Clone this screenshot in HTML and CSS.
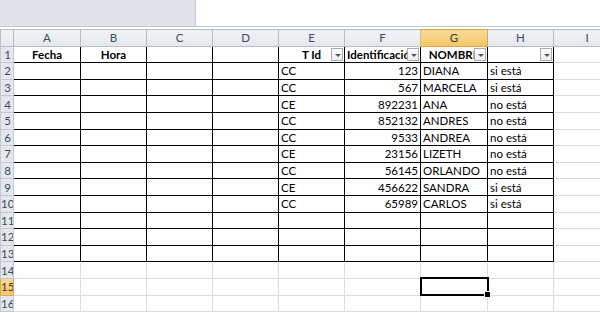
FILE: index.html
```html
<!DOCTYPE html>
<html lang="es">
<head>
    <meta charset="UTF-8">
    <title>Libro1 - Hoja1</title>
    <link rel="stylesheet" href="styles.css">
</head>
<body>
<div class="top">
    <div class="namebox"></div>
    <div class="formula"></div>
</div>
<div class="gap"></div>
<table class="sheet">
    <colgroup>
        <col class="c-rh"><col class="c-a"><col class="c-b"><col class="c-c"><col class="c-d">
        <col class="c-e"><col class="c-f"><col class="c-g"><col class="c-h"><col class="c-i">
    </colgroup>
    <tr class="colhead">
        <th class="corner"></th>
        <th>A</th><th>B</th><th>C</th><th>D</th><th>E</th><th>F</th>
        <th class="sel">G</th><th>H</th><th>I</th>
    </tr>
    <tr>
        <th class="rh">1</th>
        <td class="b hd">Fecha</td>
        <td class="b hd">Hora</td>
        <td class="b"></td>
        <td class="b"></td>
        <td class="b hd flt"><span class="txt">T Id</span><span class="fbtn"></span></td>
        <td class="b hd flt left"><span class="txt">Identificación</span><span class="fbtn"></span></td>
        <td class="b hd flt"><span class="txt">NOMBRE</span><span class="fbtn"></span></td>
        <td class="b hd flt"><span class="txt"></span><span class="fbtn"></span></td>
        <td></td>
    </tr>
    <tr><th class="rh">2</th><td class="b"></td><td class="b"></td><td class="b"></td><td class="b"></td><td class="b">CC</td><td class="b num">123</td><td class="b">DIANA</td><td class="b">si está</td><td></td></tr>
    <tr><th class="rh">3</th><td class="b"></td><td class="b"></td><td class="b"></td><td class="b"></td><td class="b">CC</td><td class="b num">567</td><td class="b">MARCELA</td><td class="b">si está</td><td></td></tr>
    <tr><th class="rh">4</th><td class="b"></td><td class="b"></td><td class="b"></td><td class="b"></td><td class="b">CE</td><td class="b num">892231</td><td class="b">ANA</td><td class="b">no está</td><td></td></tr>
    <tr><th class="rh">5</th><td class="b"></td><td class="b"></td><td class="b"></td><td class="b"></td><td class="b">CC</td><td class="b num">852132</td><td class="b">ANDRES</td><td class="b">no está</td><td></td></tr>
    <tr><th class="rh">6</th><td class="b"></td><td class="b"></td><td class="b"></td><td class="b"></td><td class="b">CC</td><td class="b num">9533</td><td class="b">ANDREA</td><td class="b">no está</td><td></td></tr>
    <tr><th class="rh">7</th><td class="b"></td><td class="b"></td><td class="b"></td><td class="b"></td><td class="b">CE</td><td class="b num">23156</td><td class="b">LIZETH</td><td class="b">no está</td><td></td></tr>
    <tr><th class="rh">8</th><td class="b"></td><td class="b"></td><td class="b"></td><td class="b"></td><td class="b">CC</td><td class="b num">56145</td><td class="b">ORLANDO</td><td class="b">no está</td><td></td></tr>
    <tr><th class="rh">9</th><td class="b"></td><td class="b"></td><td class="b"></td><td class="b"></td><td class="b">CE</td><td class="b num">456622</td><td class="b">SANDRA</td><td class="b">si está</td><td></td></tr>
    <tr><th class="rh">10</th><td class="b"></td><td class="b"></td><td class="b"></td><td class="b"></td><td class="b">CC</td><td class="b num">65989</td><td class="b">CARLOS</td><td class="b">si está</td><td></td></tr>
    <tr><th class="rh">11</th><td class="b"></td><td class="b"></td><td class="b"></td><td class="b"></td><td class="b"></td><td class="b"></td><td class="b"></td><td class="b"></td><td></td></tr>
    <tr><th class="rh">12</th><td class="b"></td><td class="b"></td><td class="b"></td><td class="b"></td><td class="b"></td><td class="b"></td><td class="b"></td><td class="b"></td><td></td></tr>
    <tr><th class="rh">13</th><td class="b"></td><td class="b"></td><td class="b"></td><td class="b"></td><td class="b"></td><td class="b"></td><td class="b"></td><td class="b"></td><td></td></tr>
    <tr><th class="rh">14</th><td></td><td></td><td></td><td></td><td></td><td></td><td></td><td></td><td></td></tr>
    <tr><th class="rh sel">15</th><td></td><td></td><td></td><td></td><td></td><td></td><td class="active"><span class="handle"></span></td><td></td><td></td></tr>
    <tr><th class="rh">16</th><td></td><td></td><td></td><td></td><td></td><td></td><td></td><td></td><td></td></tr>
</table>
</body>
</html>
```

FILE: styles.css
```css
body {
    margin: 0;
    font-family: Lato, "Open Sans", sans-serif;
    font-size: 11.5px;
    color: #000;
    background: #fff;
    overflow: hidden;
}
.top {
    display: flex;
    height: 26px;
    border-bottom: 1px solid #c3c7cd;
}
.namebox {
    width: 195px;
    background: #dfe2e7;
    border-right: 1px solid #c5c9cf;
}
.formula {
    flex: 1;
    background: #fff;
}
.gap {
    height: 2px;
    background: #fff;
}
.sheet {
    border-collapse: collapse;
    table-layout: fixed;
    width: 620px;
}
.c-rh { width: 13px; }
.c-a { width: 67px; }
.c-b { width: 66px; }
.c-c { width: 66px; }
.c-d { width: 66px; }
.c-e { width: 66px; }
.c-f { width: 76px; }
.c-g { width: 67px; }
.c-h { width: 66px; }
.c-i { width: 67px; }

.sheet tr { height: 16.6px; }
.sheet td {
    border: 1px solid #dadcdf;
    padding: 0 2px;
    white-space: nowrap;
    overflow: hidden;
    line-height: 15px;
    position: relative;
}
.sheet th {
    font-weight: normal;
    color: #3a4a5e;
    background: linear-gradient(#f1f3f6, #e3e7ec);
    border: 1px solid #b9bec6;
    padding: 0;
    line-height: 15px;
    overflow: hidden;
}
.colhead { height: 17px; }
.colhead th {
    text-align: center;
}
.corner {
    background: #e6e9ee;
}
.sheet th.rh {
    background: #e4e8ee;
    text-align: right;
    padding-right: 2px;
    border-color: #c4c9d0;
}
.sheet th.sel {
    background: linear-gradient(#f9dc9a, #f2c563);
    border-color: #e1a845;
    color: #3a3a3a;
}
.sheet td.b {
    border: 1px solid #000;
}
.hd {
    font-weight: bold;
    text-align: center;
}
.num {
    text-align: right;
}
.flt {
    padding: 0 16px 0 2px;
}
.flt.left {
    text-align: left;
}
.txt {
    display: block;
    overflow: hidden;
}
.flt.left .txt {
    overflow: visible;
}
.fbtn {
    position: absolute;
    right: 1px;
    top: 1px;
    width: 12px;
    height: 13px;
    box-sizing: border-box;
    border: 1px solid #a9adb3;
    background: linear-gradient(#fdfdfd, #eceef1);
}
.fbtn::after {
    content: "";
    position: absolute;
    left: 3px;
    top: 5px;
    border-left: 3px solid transparent;
    border-right: 3px solid transparent;
    border-top: 3px solid #555;
}
.sheet td.active {
    border: 2px solid #000;
    overflow: visible;
}
.handle {
    position: absolute;
    right: -4px;
    bottom: -4px;
    width: 5px;
    height: 5px;
    background: #000;
    border: 1px solid #fff;
}
```
